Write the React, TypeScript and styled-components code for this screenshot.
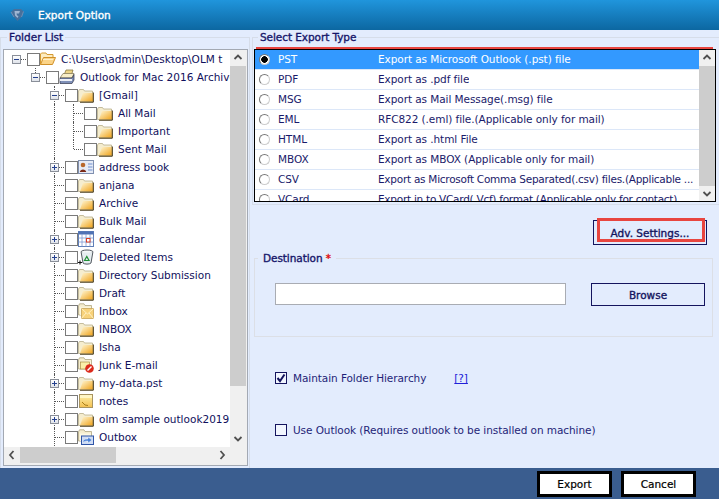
import React from 'react';
import styled, { createGlobalStyle } from 'styled-components';

type IconKind =
  | 'open'
  | 'pst'
  | 'folder'
  | 'contacts'
  | 'calendar'
  | 'deleted'
  | 'inbox'
  | 'junk'
  | 'notes'
  | 'outbox';

interface TreeRow {
  label: string;
  icon: IconKind;
  guides: boolean[];
  toggle?: 'plus' | 'minus';
  stub?: boolean;
  last?: boolean;
}

const level2 = [false, false];

const treeRows: TreeRow[] = [
  { label: 'C:\\Users\\admin\\Desktop\\OLM t', icon: 'open', guides: [], toggle: 'minus' },
  { label: 'Outlook for Mac 2016 Archive', icon: 'pst', guides: [false], toggle: 'minus', stub: true },
  { label: '[Gmail]', icon: 'folder', guides: level2, toggle: 'minus', stub: true },
  { label: 'All Mail', icon: 'folder', guides: [false, false, true] },
  { label: 'Important', icon: 'folder', guides: [false, false, true] },
  { label: 'Sent Mail', icon: 'folder', guides: [false, false, true], last: true },
  { label: 'address book', icon: 'contacts', guides: level2, toggle: 'plus' },
  { label: 'anjana', icon: 'folder', guides: level2 },
  { label: 'Archive', icon: 'folder', guides: level2 },
  { label: 'Bulk Mail', icon: 'folder', guides: level2 },
  { label: 'calendar', icon: 'calendar', guides: level2, toggle: 'plus' },
  { label: 'Deleted Items', icon: 'deleted', guides: level2, toggle: 'plus' },
  { label: 'Directory Submission', icon: 'folder', guides: level2 },
  { label: 'Draft', icon: 'folder', guides: level2 },
  { label: 'Inbox', icon: 'inbox', guides: level2 },
  { label: 'INBOX', icon: 'folder', guides: level2 },
  { label: 'Isha', icon: 'folder', guides: level2 },
  { label: 'Junk E-mail', icon: 'junk', guides: level2 },
  { label: 'my-data.pst', icon: 'folder', guides: level2, toggle: 'plus' },
  { label: 'notes', icon: 'notes', guides: level2 },
  { label: 'olm sample outlook2019', icon: 'folder', guides: level2, toggle: 'plus' },
  { label: 'Outbox', icon: 'outbox', guides: level2 },
];

const exportTypes = [
  { name: 'PST', text: 'Export as Microsoft Outlook (.pst) file' },
  { name: 'PDF', text: 'Export as .pdf file' },
  { name: 'MSG', text: 'Export as Mail Message(.msg) file' },
  { name: 'EML', text: 'RFC822 (.eml) file.(Applicable only for mail)' },
  { name: 'HTML', text: 'Export as .html File' },
  { name: 'MBOX', text: 'Export as MBOX (Applicable only for mail)' },
  { name: 'CSV', text: 'Export as Microsoft Comma Separated(.csv) files.(Applicable ...', tight: true },
  { name: 'VCard', text: 'Export in to VCard(.Vcf) format (Applicable only for contact)', tight: true },
];

const GlobalStyle = createGlobalStyle`
  html, body {
    margin: 0;
    padding: 0;
    background: #e3ecfd;
  }
  * {
    box-sizing: border-box;
  }
`;

const Window = styled.div`
  width: 719px;
  height: 499px;
  display: flex;
  flex-direction: column;
  overflow: hidden;
  background: #e3ecfd;
  font-family: 'DejaVu Sans', sans-serif;
  font-size: 10.5px;
  color: #1a1a6a;
`;

const TitleBar = styled.div`
  height: 30px;
  flex: none;
  display: flex;
  align-items: center;
  gap: 13px;
  padding: 0 0 0 9px;
  background: linear-gradient(#2095dc, #0c67a1);
  color: #fff;
  -webkit-text-stroke: 0.35px #fff;
  font-size: 10.5px;
`;

const Main = styled.div`
  flex: 1;
  min-height: 0;
  display: flex;
`;

const LeftPane = styled.fieldset`
  width: 250px;
  flex: none;
  margin: 1px 0 0 0;
  padding: 6px 1px 2px 2px;
  border: 0;
  border-top: 1px solid #d6dde9;
  border-left: 1px solid #d6dde9;
  border-right: 1px solid #d6dde9;
  display: flex;
  min-width: 0;
`;

const PaneLegend = styled.legend`
  margin-left: 4px;
  padding: 0 2px;
  color: #16166a;
  -webkit-text-stroke: 0.35px #16166a;
  font-size: 10.5px;
  line-height: 12px;
`;

const TreeBox = styled.div`
  width: 245px;
  height: 417px;
  border: 1px solid #a3a9b3;
  background: #f0f0f0;
  display: grid;
  grid-template-columns: 226px 16px;
  grid-template-rows: 397px 16px;
`;

const TreeList = styled.div`
  background: #fff;
  padding-left: 3px;
  overflow: hidden;
  color: #10105c;
`;

const Row = styled.div`
  height: 18px;
  display: flex;
  align-items: center;
  white-space: nowrap;
`;

const Indent = styled.div<{ $line?: boolean; $short?: boolean }>`
  width: 19px;
  height: 18px;
  flex: none;
  position: relative;
  ${p =>
    p.$line &&
    `&::before {
      content: '';
      position: absolute;
      left: 9px;
      top: 0;
      height: ${p.$short ? '9px' : '18px'};
      border-left: 1px dotted #555;
    }`}
`;

const Branch = styled(Indent)`
  &::after {
    content: '';
    position: absolute;
    left: 10px;
    top: 9px;
    width: 9px;
    border-top: 1px dotted #555;
  }
`;

const Toggle = styled.span`
  position: absolute;
  z-index: 1;
  left: 5px;
  top: 5px;
  width: 9px;
  height: 9px;
  border: 1px solid #8a8f99;
  background: linear-gradient(#fff, #dfe3ea);
  &::before {
    content: '';
    position: absolute;
    left: 1px;
    top: 3px;
    width: 5px;
    height: 1px;
    background: #24408e;
  }
`;

const PlusBar = styled.span`
  position: absolute;
  left: 3px;
  top: 1px;
  width: 1px;
  height: 5px;
  background: #24408e;
`;

const TreeCheck = styled.span`
  width: 13px;
  height: 13px;
  flex: none;
  margin-left: 1px;
  border: 1px solid #7a7a7a;
  background: #fff;
`;

const IconSlot = styled.span`
  width: 16px;
  height: 16px;
  flex: none;
  display: block;
  margin-right: 5px;
  svg {
    display: block;
  }
`;

const ScrollV = styled.div`
  width: 16px;
  flex: none;
  display: flex;
  flex-direction: column;
  align-items: center;
  background: #f0f0f0;
`;

const ScrollH = styled.div`
  display: flex;
  align-items: center;
  background: #f0f0f0;
`;

const ArrowCell = styled.div`
  width: 16px;
  height: 16px;
  flex: none;
  display: flex;
  align-items: center;
  justify-content: center;
`;

const ThumbV = styled.div<{ $size: number }>`
  width: 100%;
  height: ${p => p.$size}px;
  flex: none;
  background: #cdcdcd;
`;

const ThumbH = styled.div<{ $size: number }>`
  height: 100%;
  width: ${p => p.$size}px;
  flex: none;
  background: #cdcdcd;
`;

const Track = styled.div`
  flex: 1;
`;

const RightPane = styled.div`
  flex: 1;
  min-width: 0;
  padding-left: 2px;
  display: flex;
  flex-direction: column;
  letter-spacing: -0.07px;
`;

const TypeGroup = styled.fieldset`
  position: relative;
  margin: 1px 0 0 0;
  padding: 6px 2px 0 1px;
  height: 174px;
  min-width: 0;
  border: 1px solid #d6dde9;
  border-right: 0;
`;

const RedLine = styled.div`
  position: absolute;
  left: 3px;
  right: 6px;
  top: 4px;
  height: 2px;
  background: #e8453f;
`;

const TypeBox = styled.div`
  width: 462px;
  height: 153px;
  border: 1px solid #000;
  background: #fff;
  display: flex;
  color: #1a1a6a;
`;

const TypeList = styled.div`
  flex: 1;
  min-width: 0;
  overflow: hidden;
`;

const TypeRow = styled.div<{ $selected?: boolean }>`
  height: 20px;
  display: flex;
  align-items: center;
  white-space: nowrap;
  padding-bottom: 1px;
  background: ${p => (p.$selected ? '#3399ff' : '#fff')};
  color: ${p => (p.$selected ? '#fff' : 'inherit')};
  border-bottom: 1px solid #dce7f8;
`;

const Radio = styled.span<{ $on?: boolean }>`
  width: 11px;
  height: 11px;
  flex: none;
  margin-left: 4px;
  border-radius: 50%;
  border: 1px solid #777;
  border-right-color: #ccc;
  border-bottom-color: #ccc;
  background: ${p => (p.$on ? 'radial-gradient(circle, #000 0 3px, #fff 3.6px)' : '#fff')};
`;

const TypeName = styled.span`
  width: 100px;
  flex: none;
  margin-left: 8px;
`;

const TypeText = styled.span<{ $tight?: boolean }>`
  overflow: hidden;
  letter-spacing: ${p => (p.$tight ? '-0.26px' : 'inherit')};
`;

const AdvRow = styled.div`
  height: 46px;
  flex: none;
  display: flex;
  justify-content: flex-end;
  padding: 15px 12px 0 0;
`;

const OutlineButton = styled.button<{ $w: number; $h: number }>`
  position: relative;
  width: ${p => p.$w}px;
  height: ${p => p.$h}px;
  padding: 0;
  border: 1px solid #14145e;
  background: #e3ecfd;
  color: #14145e;
  font: 400 10.5px 'DejaVu Sans', sans-serif;
  -webkit-text-stroke: 0.35px #14145e;
`;

const RedBox = styled.span`
  position: absolute;
  left: 3px;
  top: -3px;
  right: 1px;
  bottom: 2px;
  border: 3px solid #e8453f;
`;

const DestGroup = styled.fieldset`
  height: 86px;
  margin: 0 6px 0 2px;
  padding: 18px 7px 0 20px;
  min-width: 0;
  border: 1px solid #dcdfe6;
`;

const DestLegend = styled.legend`
  margin-left: -17px;
  padding: 0 5px;
  color: #16166a;
  font-size: 10.5px;
  line-height: 14px;
`;

const DestLabel = styled.span`
  -webkit-text-stroke: 0.35px #16166a;
`;

const DestRow = styled.div`
  display: flex;
  align-items: flex-start;
  justify-content: space-between;
`;

const Required = styled.span`
  color: #e01010;
  -webkit-text-stroke: 0.35px #e01010;
`;

const PathInput = styled.input`
  width: 291px;
  height: 22px;
  padding: 0 3px;
  border: 1px solid #a9acb3;
  background: #fff;
`;

const OptionRow = styled.label<{ $top: number }>`
  display: flex;
  align-items: center;
  margin: ${p => p.$top}px 0 0 23px;
  height: 14px;
  color: #1f1f78;
`;

const CheckBox = styled.span`
  width: 12px;
  height: 12px;
  flex: none;
  margin-right: 6px;
  border: 1px solid #14145e;
  background: #f2f6fe;
  display: flex;
  align-items: center;
  justify-content: center;
`;

const HelpLink = styled.a`
  margin-left: 28px;
  color: #2020d8;
  text-decoration: underline;
`;

const Footer = styled.div`
  height: 31px;
  flex: none;
  display: flex;
  justify-content: flex-end;
  align-items: center;
  gap: 9px;
  padding: 0 23px 0 0;
  background: #3a5d8f;
`;

const FooterButton = styled.button`
  width: 75px;
  height: 26px;
  padding: 0;
  border: 3px solid #000;
  background: #fff;
  color: #000;
  font: 400 10.5px 'DejaVu Sans', sans-serif;
  -webkit-text-stroke: 0.2px #000;
`;

const FolderShape = () => (
  <>
    <defs>
      <linearGradient id="fold" x1="0" y1="0" x2="1" y2="1">
        <stop offset="0" stopColor="#fff8d8" />
        <stop offset="1" stopColor="#f0a31a" />
      </linearGradient>
    </defs>
    <path d="M0.5 4 L1.5 2.5 H5.5 L6.5 4 H14.5 V14.5 H0.5 Z" fill="#f5edcf" stroke="#b8ae8a" strokeWidth="0.8" />
    <path d="M2 14.5 L5 6 H14.8 V14.5 Z" fill="url(#fold)" />
    <path d="M15.3 5.5 V15.2 H2" fill="none" stroke="#3a2c08" strokeWidth="1" />
  </>
);

const PaleFolder = () => (
  <>
    <path d="M0.5 3 L1.5 0.8 H6 L7 2.5 H13.5 V12 H0.5 Z" fill="#f5edcf" stroke="#b0a680" strokeWidth="0.8" />
    <path d="M2 4.5 H13 V12 H2 Z" fill="#fdf8e2" />
  </>
);

const TreeIcon: React.FC<{ kind: IconKind }> = ({ kind }) => {
  let body: React.ReactNode = <FolderShape />;
  if (kind === 'open') {
    body = (
      <>
        <path d="M0.5 13.5 V3 L1.5 2 H6 L7 3.5 H13 V6" fill="#fdecc0" stroke="#d49a30" />
        <path d="M0.5 13.5 L3.5 6.5 H15.5 L12.5 13.5 Z" fill="#fbd488" stroke="#d09028" />
        <path d="M3 8.5 H13" stroke="#fff0c8" />
      </>
    );
  } else if (kind === 'pst') {
    body = (
      <>
        <path d="M5 6 L7 1 H14 L12.5 6 Z" fill="#ecd488" stroke="#7a6a30" strokeWidth="0.7" />
        <path d="M1 9 L4 4.5 H15 L13 9 Z" fill="#f8eec8" stroke="#7a7050" strokeWidth="0.7" />
        <path d="M1 9 H13 L15 5.5 V11 L13 14.5 H1 Z" fill="#7f90b8" stroke="#30354a" strokeWidth="0.7" />
        <path d="M1 10 H13 V12 H1 Z" fill="#eef1f8" />
      </>
    );
  } else if (kind === 'contacts') {
    body = (
      <>
        <rect x="0.5" y="1.5" width="15" height="13" fill="#e6ebf6" stroke="#8090b0" />
        <circle cx="5" cy="6" r="2.3" fill="#b8682c" />
        <path d="M1.8 13 C2 9.5 8 9.5 8.2 13 Z" fill="#7a2a18" />
        <path d="M10 5 H14.5 M10 8 H14.5 M10 11 H14.5" stroke="#6f8fd0" />
      </>
    );
  } else if (kind === 'calendar') {
    body = (
      <>
        <rect x="0.5" y="0.5" width="15" height="15" fill="#fff" stroke="#5f7fb8" />
        <rect x="0.5" y="0.5" width="15" height="3" fill="#4f72b4" />
        <path d="M0.5 7 H15.5 M0.5 11 H15.5 M4 3 V15.5 M8 3 V15.5 M12 3 V15.5" stroke="#7f9bd0" strokeWidth="0.8" />
        <rect x="8.5" y="7.5" width="3.5" height="3.5" fill="#fff" stroke="#d83a20" />
      </>
    );
  } else if (kind === 'deleted') {
    body = (
      <>
        <ellipse cx="9" cy="3" rx="6" ry="2" fill="#f4f7f8" stroke="#3f464e" strokeWidth="0.9" />
        <path d="M3.2 3.5 L5 14 C6.5 15.5 11.5 15.5 13 14 L14.8 3.5" fill="#e6edf0" stroke="#3f464e" strokeWidth="0.9" />
        <path d="M6.5 11.5 L8.8 7.5 L11 11.5 Z" fill="none" stroke="#1f8f34" strokeWidth="1.2" />
        <path d="M0 13.5 H4 M2 11.5 V15.5" stroke="#111" strokeWidth="1.1" />
      </>
    );
  } else if (kind === 'inbox') {
    body = (
      <>
        <PaleFolder />
        <rect x="3.5" y="5.5" width="12" height="10" fill="#f8d27a" stroke="#c8a458" strokeWidth="0.8" />
        <path d="M3.5 5.5 L9.5 11 L15.5 5.5 M3.5 15.5 L8 10 M15.5 15.5 L11 10" fill="none" stroke="#fff0c4" strokeWidth="1" />
      </>
    );
  } else if (kind === 'junk') {
    body = (
      <>
        <PaleFolder />
        <rect x="2.5" y="5" width="9" height="7" fill="#fbeea8" stroke="#a88c40" strokeWidth="0.7" />
        <circle cx="11.5" cy="11.5" r="4.3" fill="#dc2a1c" />
        <path d="M9.5 13.5 L13.5 9.5" stroke="#fff" strokeWidth="1.4" />
      </>
    );
  } else if (kind === 'notes') {
    body = (
      <>
        <defs>
          <linearGradient id="note" x1="0" y1="0" x2="0" y2="1">
            <stop offset="0" stopColor="#fdf0a8" />
            <stop offset="1" stopColor="#f4c050" />
          </linearGradient>
        </defs>
        <rect x="1.5" y="1.5" width="13" height="13" fill="url(#note)" stroke="#a89460" />
        <rect x="2" y="2" width="12" height="3" fill="#fff6c4" />
        <path d="M4 9 L7 12 L10 12.5" fill="none" stroke="#a87e18" />
      </>
    );
  } else if (kind === 'outbox') {
    body = (
      <>
        <PaleFolder />
        <rect x="3.5" y="7" width="12" height="8.5" fill="#cfdcf4" stroke="#2f55a8" />
        <path d="M5 13.5 C5 10.5 7 10 10 10 V8 L14 11 L10 14 V12 C8 12 6.5 12 5 13.5 Z" fill="#4a82d8" stroke="#fff" strokeWidth="0.4" />
      </>
    );
  }
  return (
    <svg width="16" height="16" viewBox="0 0 16 16">
      {body}
    </svg>
  );
};

const Arrow: React.FC<{ dir: 'up' | 'down' | 'left' | 'right' }> = ({ dir }) => {
  const paths = {
    up: 'M1.5 6 L5 2.5 L8.5 6',
    down: 'M1.5 3 L5 6.5 L8.5 3',
    left: 'M6.5 1 L3 5 L6.5 9',
    right: 'M3.5 1 L7 5 L3.5 9',
  };
  return (
    <svg width="10" height="10" viewBox="0 0 10 10">
      <path d={paths[dir]} fill="none" stroke="#505050" strokeWidth="1.8" />
    </svg>
  );
};

const TitleLogo = () => (
  <svg width="16" height="16" viewBox="0 0 16 16">
    <path d="M2 5 L5 2 H12 L14.5 4.5 L12.5 10 L8.5 14 L5 10 Z" fill="#47709c" />
    <path d="M5.5 4 H11 L10 6.5 H7.5 L8 8.5 L9.5 9 L8.5 11 L6 8.5 Z" fill="#9fb6d2" />
    <path d="M2 5 L5 10 M14.5 4.5 L12.5 10" stroke="#6f8fb4" />
  </svg>
);

// level 3 rows carry the level 2 guide plus their own elbow
const BranchCell: React.FC<{ row: TreeRow }> = ({ row }) => {
  const level = row.guides.length;
  return (
    <Branch $line={level >= 1} $short={row.last || (row.stub && level < 2)}>
      {row.toggle && <Toggle>{row.toggle === 'plus' && <PlusBar />}</Toggle>}
    </Branch>
  );
};

const FolderTree = () => (
  <TreeList>
    {treeRows.map(row => (
      <Row key={row.label}>
        {row.guides.map((on, i) => (
          <Indent key={i} $line={on} />
        ))}
        <BranchCell row={row} />
        <TreeCheck />
        <IconSlot>
          <TreeIcon kind={row.icon} />
        </IconSlot>
        {row.label}
      </Row>
    ))}
  </TreeList>
);

export default function App() {
  return (
    <>
      <GlobalStyle />
      <Window>
        <TitleBar>
          <TitleLogo />
          Export Option
        </TitleBar>
        <Main>
          <LeftPane>
            <PaneLegend>Folder List</PaneLegend>
            <TreeBox>
              <FolderTree />
              <ScrollV>
                <ArrowCell>
                  <Arrow dir="up" />
                </ArrowCell>
                <ThumbV $size={320} />
                <Track />
                <ArrowCell>
                  <Arrow dir="down" />
                </ArrowCell>
              </ScrollV>
              <ScrollH>
                <ArrowCell>
                  <Arrow dir="left" />
                </ArrowCell>
                <ThumbH $size={96} />
                <Track />
                <ArrowCell>
                  <Arrow dir="right" />
                </ArrowCell>
              </ScrollH>
              <ScrollH />
            </TreeBox>
          </LeftPane>
          <RightPane>
            <TypeGroup>
              <PaneLegend>Select Export Type</PaneLegend>
              <RedLine />
              <TypeBox>
                <TypeList>
                  {exportTypes.map((t, i) => (
                    <TypeRow key={t.name} $selected={i === 0}>
                      <Radio $on={i === 0} />
                      <TypeName>{t.name}</TypeName>
                      <TypeText $tight={t.tight}>{t.text}</TypeText>
                    </TypeRow>
                  ))}
                </TypeList>
                <ScrollV>
                  <ArrowCell>
                    <Arrow dir="up" />
                  </ArrowCell>
                  <ThumbV $size={120} />
                  <Track />
                  <ArrowCell>
                    <Arrow dir="down" />
                  </ArrowCell>
                </ScrollV>
              </TypeBox>
            </TypeGroup>
            <AdvRow>
              <OutlineButton $w={114} $h={25}>
                Adv. Settings...
                <RedBox />
              </OutlineButton>
            </AdvRow>
            <DestGroup>
              <DestLegend>
                <DestLabel>Destination</DestLabel> <Required>*</Required>
              </DestLegend>
              <DestRow>
                <PathInput />
                <OutlineButton $w={114} $h={23}>
                  Browse
                </OutlineButton>
              </DestRow>
            </DestGroup>
            <OptionRow $top={34}>
              <CheckBox>
                <svg width="10" height="10" viewBox="0 0 10 10">
                  <path d="M1.5 5 L4 8 L8.5 1.5" fill="none" stroke="#14145e" strokeWidth="2" />
                </svg>
              </CheckBox>
              Maintain Folder Hierarchy
              <HelpLink>[?]</HelpLink>
            </OptionRow>
            <OptionRow $top={38}>
              <CheckBox />
              Use Outlook (Requires outlook to be installed on machine)
            </OptionRow>
          </RightPane>
        </Main>
        <Footer>
          <FooterButton>Export</FooterButton>
          <FooterButton>Cancel</FooterButton>
        </Footer>
      </Window>
    </>
  );
}
